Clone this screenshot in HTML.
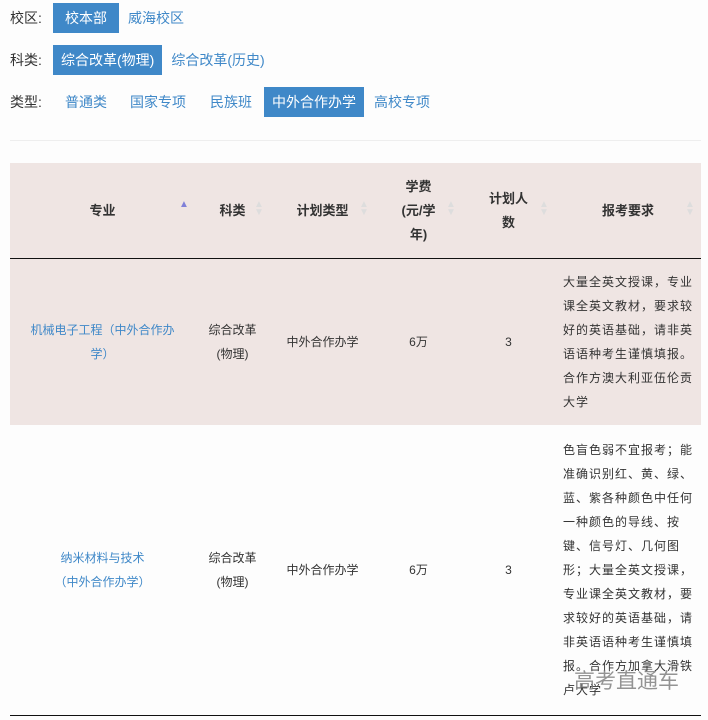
<!DOCTYPE html>
<html><head><meta charset="utf-8"><style>
body{margin:0;background:#fdfdfd;font-family:"Liberation Sans","Noto Sans CJK SC",sans-serif;font-size:13px;color:#333;width:708px;height:720px;overflow:hidden;position:relative}
.row{position:absolute;left:10px;height:30px;line-height:30px;white-space:nowrap;font-size:14px}
.row span{display:inline-block;margin-right:0}
.lab{width:43px}
.o{color:#3f88c8;padding:0 9px}
.a{background:#3f88c8;color:#fff;padding:0 12px}
.hr{position:absolute;left:10px;top:140px;width:691px;border-top:1px solid #eee}
table{position:absolute;left:10px;top:163px;width:691px;border-collapse:collapse;table-layout:fixed}
th{background:#efe5e3;height:95px;font-weight:bold;font-size:13px;line-height:24px;position:relative;border-bottom:1px solid #111;padding:0}
td{text-align:center;line-height:24px;padding:0;font-size:12px}
.r1 td{background:#efe5e3;height:166px}
.r2 td{background:#fdfdfd;height:290px;border-bottom:1px solid #111}
td.q{text-align:left;padding:0 8px;letter-spacing:1px}
.b{color:#3f88c8}
.s{position:absolute;right:6px;top:38px;font-size:10px;line-height:8px;color:#ddd;width:10px}
.s.up{color:#8080d8}
.wm{position:absolute;left:574px;top:665px;font-size:21px;letter-spacing:0;color:rgba(120,120,120,.8);white-space:nowrap}
</style></head><body>
<div class="row" style="top:3px"><span class="lab">校区:</span><span class="a">校本部</span><span class="o">威海校区</span></div>
<div class="row" style="top:45px"><span class="lab">科类:</span><span class="a" style="padding:0 8px">综合改革(物理)</span><span class="o">综合改革(历史)</span></div>
<div class="row" style="top:87px"><span class="lab">类型:</span><span class="o" style="padding:0 11px 0 12px">普通类</span><span class="o" style="padding:0 12px">国家专项</span><span class="o" style="padding:0 12px">民族班</span><span class="a" style="padding:0 8px">中外合作办学</span><span class="o" style="padding:0 10px 0 10px">高校专项</span></div>
<div class="hr"></div>
<table>
<colgroup><col style="width:185px"><col style="width:75px"><col style="width:105px"><col style="width:87px"><col style="width:93px"><col style="width:146px"></colgroup>
<tr><th>专业<div class="s up" style="top:38px">▲</div></th><th>科类<div class="s">▲<br>▼</div></th><th>计划类型<div class="s">▲<br>▼</div></th><th>学费<br>(元/学<br>年)<div class="s">▲<br>▼</div></th><th>计划人<br>数<div class="s">▲<br>▼</div></th><th>报考要求<div class="s">▲<br>▼</div></th></tr>
<tr class="r1"><td class="b" style="padding:0 20px">机械电子工程（中外合作办学）</td><td>综合改革<br>(物理)</td><td>中外合作办学</td><td>6万</td><td>3</td><td class="q">大量全英文授课，专业课全英文教材，要求较好的英语基础，请非英语语种考生谨慎填报。合作方澳大利亚伍伦贡大学</td></tr>
<tr class="r2"><td class="b">纳米材料与技术<br>（中外合作办学）</td><td>综合改革<br>(物理)</td><td>中外合作办学</td><td>6万</td><td>3</td><td class="q">色盲色弱不宜报考；能准确识别红、黄、绿、蓝、紫各种颜色中任何一种颜色的导线、按键、信号灯、几何图形；大量全英文授课，专业课全英文教材，要求较好的英语基础，请非英语语种考生谨慎填报。合作方加拿大滑铁卢大学</td></tr>
</table>
<div class="wm">高考直通车</div>
</body></html>
